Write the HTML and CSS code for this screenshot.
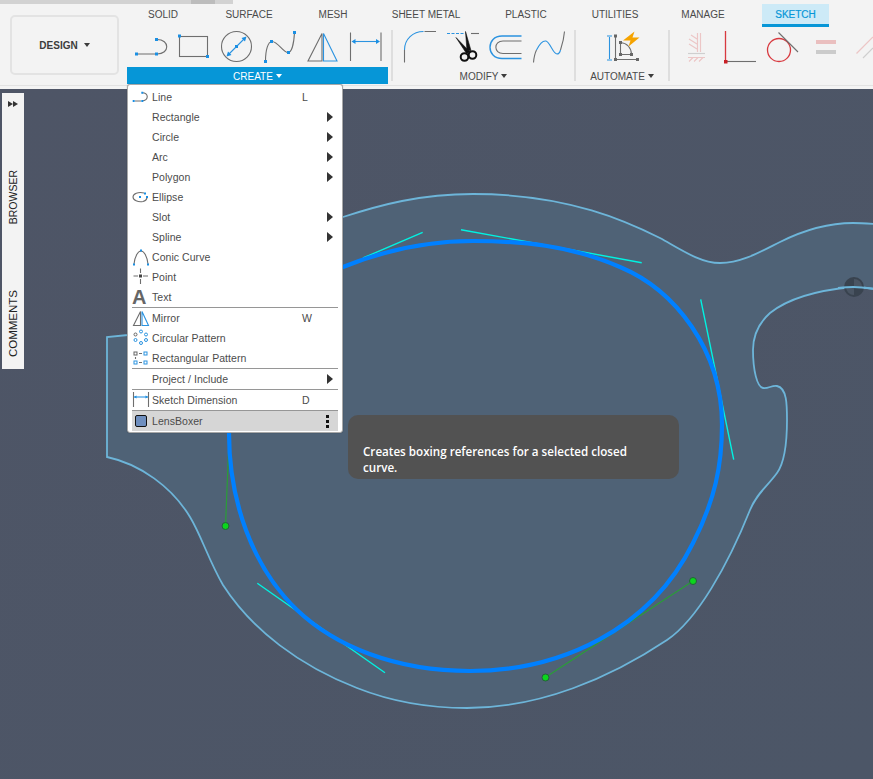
FILE: index.html
```html
<!DOCTYPE html>
<html lang="en">
<head>
<meta charset="utf-8">
<title>Sketch workspace</title>
<link rel="stylesheet" href="styles.css">
</head>
<body>
<div class="app">
  <header class="toolbar">
    <div class="title-strip"><span class="strip-a"></span><span class="strip-b"></span><span class="strip-c"></span></div>
    <div class="toolbar-body">
      <button class="design-btn">DESIGN<i class="caret dark"></i></button>
      <div class="ribbon">
        <nav class="tabs">
          <span class="tab t72">SOLID</span>
          <span class="tab t100">SURFACE</span>
          <span class="tab t68">MESH</span>
          <span class="tab t118">SHEET METAL</span>
          <span class="tab t82">PLASTIC</span>
          <span class="tab t96">UTILITIES</span>
          <span class="tab t80">MANAGE</span>
          <span class="tab tab-active">SKETCH</span>
        </nav>
        <div class="groups">
          <section class="group g-create">
            <div class="icons">
              <svg class="ti" viewBox="132 30 42 37"><path class="gr" d="M137 54H157M157 39.500C170 39.500 170 54 157 54"/><path class="sq" d="M135 52.500h3v3h-3zM155 52.500h3v3h-3zM155 38h3v3h-3z"/></svg>
              <svg class="ti" viewBox="174 30 42 37"><rect class="gr" x="179.500" y="36.500" width="28" height="20"/><path class="sq" d="M178 34.500h3v3h-3zM206 55h3v3h-3z"/></svg>
              <svg class="ti" viewBox="216 30 42 37"><circle class="gr" cx="236.500" cy="46.500" r="15"/><path class="bl" d="M229 54L244 39"/><path class="sq" d="M235 45h3v3h-3zM226.500 56.500l1.500-5 3.500 3.500zM246.500 36.500l-1.500 5-3.500-3.500z"/></svg>
              <svg class="ti" viewBox="258 30 42 37"><path class="gr" d="M265.500 61C265.500 50 268 41.500 272 41.500C278 41.500 283 52.500 288 52.500C292 52.500 294 42 294.500 32.500"/><path class="sq" d="M264 60h3v3h-3zM270 40h3v3h-3zM287 51h3v3h-3zM293 31h3v3h-3z"/></svg>
              <svg class="ti" viewBox="300 30 42 37"><path class="gr" d="M322 33.500V61H308Z"/><path class="bl" d="M323.500 33.500V61H337Z"/></svg>
              <svg class="ti" viewBox="342 30 42 37"><path class="gr" d="M350.500 32.500V61M381 32.500V61"/><path class="bl" d="M353 41.500H378"/><path class="sq" d="M351.500 41.500l4-2.500v5zM380 41.500l-4-2.500v5z"/></svg>
            </div>
            <div class="group-label create-label">CREATE<i class="caret light"></i></div>
          </section>
          <i class="sep"></i>
          <section class="group g-modify">
            <div class="icons">
              <svg class="ti narrow" viewBox="400 30 43 37"><path class="gr" d="M404.500 50V62.500M424.500 31.500H436"/><path class="bl" d="M404.500 50C404.500 39 413 31.500 423.500 31.500"/></svg>
              <svg class="ti narrow" viewBox="443 30 43 37"><path class="bl dash" d="M447 33.500H464"/><path class="gr" d="M471 33.500H479"/><path class="blk" d="M456 37.500L470 52L466.500 53.500ZM465.500 31.500L471 50.500L467 51Z"/><circle class="ring" cx="464.500" cy="57" r="3.800"/><circle class="ring" cx="472.500" cy="55" r="3.800"/></svg>
              <svg class="ti narrow" viewBox="486 30 43 37"><path class="bl thick" d="M521.500 36H502C486 36 486 58.500 502 58.500H521.500"/><path class="gr" d="M521.500 41H503C493.500 41 493.500 53.500 503 53.500H521.500"/></svg>
              <svg class="ti narrow" viewBox="529 30 43 37"><path class="gr" d="M533.500 62.500C534 57 535 53 536.500 50M560.500 50C562.500 44 564 38 564.500 31.500"/><path class="bl" d="M536.500 50C540 43 543 40.500 546 41C550 42 553 54 557 54C559 54 560 52 560.500 50"/></svg>
            </div>
            <div class="group-label">MODIFY<i class="caret dark"></i></div>
          </section>
          <i class="sep"></i>
          <section class="group g-automate">
            <div class="icons center">
              <svg class="ti" viewBox="601 30 42 37"><path class="bl" d="M609.500 37V59M607 36h5M607 60h5"/><path class="gr" d="M615.500 36V59.500H637.500M620.500 42.500V54.500H631.500C631.500 48 627 43 620.500 42.500"/><path class="sqg" d="M614 34.500h3v3h-3zM614 58h3v3h-3zM636 58h3v3h-3zM630 53h3v3h-3zM619 41h3v3h-3zM619 53h3v3h-3z"/><path class="bolt" d="M634.500 31.500L623 40.500H630.500L628.500 46.500L639.500 37.500H632.500Z"/></svg>
            </div>
            <div class="group-label">AUTOMATE<i class="caret dark"></i></div>
          </section>
          <i class="sep"></i>
          <section class="group g-constraints">
            <div class="icons">
              <svg class="ci c-fix" viewBox="680 30 36 37"><path class="pk" d="M697.500 33V52M700.500 33V52M689 39l8 5M689 44l8 5M691 35l6 4M688 57.500H705M693 57.500l-4 4M698 57.500l-4 4M703 57.500l-4 4"/><path class="lg" d="M688 53.500H705"/></svg>
              <svg class="ci c-coin" viewBox="716 30 44 37"><path class="rd" d="M725.500 31V60"/><path class="gr" d="M727 61.500H756"/><path class="rds" d="M724 60h3.500v3.500H724z"/></svg>
              <svg class="ci c-tan" viewBox="760 30 50 37"><circle class="rd" cx="779" cy="50" r="11.500"/><path class="gr" d="M778.500 32.500L798 52"/></svg>
              <svg class="ci c-eq" viewBox="810 30 36 37"><path class="pkf" d="M816 40h20v4h-20z"/><path class="lgf" d="M816 50h20v4h-20z"/></svg>
              <svg class="ci c-par" viewBox="846 30 27 37"><path class="pk" d="M856.500 53.500L873 37"/><path class="lg" d="M863 58L873 48"/></svg>
            </div>
          </section>
        </div>
      </div>
    </div>
    <div class="toolbar-rule"></div>
  </header>

  <main class="canvas">
    <svg class="drawing" viewBox="0 89 873 690" preserveAspectRatio="none">
      <path class="profile" d="M107 337V457C140 464 172 487 190 517C201 535 209 561 223 585C252 630 300 666 357 688C395 703 430 708 467 708C540 708 610 678 667 640C697 620 728 565 750 510C757 493 766 488 777 473C785 462 787 440 787 420C787 405 787 388 777 386C772 385 768 389 763 388C757 387 753 370 753 350C753 335 760 322 770 313C790 297 820 290 853 287C860 287 868 288 875 289V224C868 223.500 860 223 853 223C825 223 800 232 780 242C762 251 742 263 720 263C700 263 680 249 660 238C630 223 570 194 473 194C420 194 380 205 343 217C280 240 200 325 128 335Z"/>
      <path class="tan" d="M422.700 232.300L363 258M461 229.700L641.700 262.700M700.700 299.300L733.700 459.700M257.300 583.300L385 672.700"/>
      <path class="gline" d="M225.500 526L229 440M693 581L546 677"/>
      <path class="lens" d="M229 433C229 500 252 567 297 610C335 646 395 671 470 671C560 671 650 630 693 543C715 500 722 465 722 425C722 350 675 290 620 267C570 245 520 241 473 241C430 241 385 250 343 267C290 290 229 360 229 433Z"/>
      <circle class="gdot" cx="225.500" cy="526" r="3.500"/>
      <circle class="gdot" cx="693" cy="581" r="3.500"/>
      <circle class="gdot" cx="545.500" cy="677.500" r="3.500"/>
      <circle class="pivot" cx="854" cy="287" r="10"/>
      <path class="pivot-inner" d="M854 287V279A8 8 0 0 1 862 287ZM854 287V295A8 8 0 0 1 846 287Z"/>
      <path class="pivot-line" d="M838 288C843 287.500 848 287 853 287C860 287 868 288 875 289"/>
    </svg>

    <aside class="side-panel">
      <span class="side-arrows"><i></i><i></i></span>
      <span class="side-text browser">BROWSER</span>
      <span class="side-text comments">COMMENTS</span>
    </aside>

    <div class="menu">
      <div class="row"><svg class="mi" viewBox="0 0 20 20"><path class="gr" d="M3 14H9M10 5.700C17 5.700 17 14 10 14"/><path class="sq" d="M.7 13h2v2h-2zM9.300 13h2v2h-2zM9.300 4.700h2v2h-2z"/></svg><span class="lbl">Line</span><span class="key">L</span></div>
      <div class="row"><span></span><span class="lbl">Rectangle</span><span></span><i class="sub"></i></div>
      <div class="row"><span></span><span class="lbl">Circle</span><span></span><i class="sub"></i></div>
      <div class="row"><span></span><span class="lbl">Arc</span><span></span><i class="sub"></i></div>
      <div class="row"><span></span><span class="lbl">Polygon</span><span></span><i class="sub"></i></div>
      <div class="row"><svg class="mi" viewBox="0 0 20 20"><path class="gr" d="M12 6C6 4.500 1 7 1 10S6 15.500 11 14.500C13 14 14.500 13 15 11"/><path class="sq" d="M7 9h2v2H7zM12 5.500h2v2h-2zM14 9h2v2h-2z"/></svg><span class="lbl">Ellipse</span></div>
      <div class="row"><span></span><span class="lbl">Slot</span><span></span><i class="sub"></i></div>
      <div class="row"><span></span><span class="lbl">Spline</span><span></span><i class="sub"></i></div>
      <div class="row"><svg class="mi" viewBox="0 0 20 20"><path class="gr" d="M2 17C3 9 6 4 9 4S15 9 16 17"/><path class="sq" d="M1 16.500h2v2H1zM15 16.500h2v2h-2zM8 2.500h2v2H8z"/></svg><span class="lbl">Conic Curve</span></div>
      <div class="row"><svg class="mi" viewBox="0 0 20 20"><path class="gr" d="M1.500 9H6M11 9H16M8.500 1.500V6M8.500 12V17"/><path class="dk" d="M7 7.500h3v3H7z"/></svg><span class="lbl">Point</span></div>
      <div class="row"><span class="glyph-a">A</span><span class="lbl">Text</span></div>
      <hr class="rule">
      <div class="row"><svg class="mi" viewBox="0 0 20 20"><path class="gr" d="M8.500 3.500V17.500H1.500Z"/><path class="bl" d="M10 3.500V17.500H16.500Z"/></svg><span class="lbl">Mirror</span><span class="key">W</span></div>
      <div class="row"><svg class="mi" viewBox="0 0 20 20"><g class="ringb"><circle cx="9" cy="3.500" r="1.500"/><circle cx="14" cy="6.500" r="1.500"/><circle cx="14" cy="12" r="1.500"/><circle cx="9" cy="15" r="1.500"/><circle cx="3.500" cy="12" r="1.500"/></g><circle class="ringg" cx="3.500" cy="6.500" r="1.500"/></svg><span class="lbl">Circular Pattern</span></div>
      <div class="row"><svg class="mi" viewBox="0 0 20 20"><rect class="ringg" x="2" y="4" width="3" height="3"/><rect class="ringb" x="12" y="4" width="3" height="3"/><rect class="ringb" x="2" y="13" width="3" height="3"/><rect class="ringb" x="12" y="13" width="3" height="3"/><path class="gr" d="M7 5.500H10M3.500 9V11M7 14.500H10"/></svg><span class="lbl">Rectangular Pattern</span></div>
      <hr class="rule">
      <div class="row"><span></span><span class="lbl">Project / Include</span><span></span><i class="sub"></i></div>
      <hr class="rule">
      <div class="row"><svg class="mi" viewBox="0 0 20 20"><path class="gr" d="M1.500 2V17M16.500 2V17"/><path class="bl" d="M2 7H16"/><path class="sq" d="M2 7l2.500-1.500v3zM16 7l-2.500-1.500v3z"/></svg><span class="lbl">Sketch Dimension</span><span class="key">D</span></div>
      <hr class="rule">
      <div class="row row-on"><span class="lens-icon"></span><span class="lbl">LensBoxer</span><span></span><span class="kebab"><i></i><i></i><i></i></span></div>
    </div>

    <div class="tip">Creates boxing references for a selected closed curve.</div>
  </main>
</div>
</body>
</html>
```
FILE: styles.css
```css
* { box-sizing: border-box; }
html, body { margin: 0; height: 100%; }
body { font-family: "Liberation Sans", Arial, sans-serif; background: #4d5566; overflow: hidden; }
.app { width: 873px; height: 779px; display: flex; flex-direction: column; }

.toolbar { height: 89px; background: #f3f3f3; flex: none; display: flex; flex-direction: column; }
.title-strip { height: 4px; display: flex; flex: none; }
.strip-a { width: 191px; background: #d2d2d2; }
.strip-b { width: 24px; background: #bcbcbc; }
.strip-c { width: 18px; background: #d2d2d2; }
.toolbar-body { display: flex; height: 81px; padding-left: 10px; }
.toolbar-rule { height: 1px; background: #e2e2e2; }

.design-btn { width: 109px; height: 60px; margin: 11px 8px 0 0; border: 2px solid #e3e3e3; border-radius: 5px; background: #f3f3f3; font: bold 10px "Liberation Sans", Arial, sans-serif; color: #3c3c3c; padding: 0; }
.caret { display: inline-block; width: 0; height: 0; border-left: 3px solid transparent; border-right: 3px solid transparent; margin-left: 3px; vertical-align: 2px; }
.design-btn .caret { margin-left: 6px; }
.caret.dark { border-top: 4px solid #3c3c3c; }
.caret.light { border-top: 4px solid #fff; }

.ribbon { display: flex; flex-direction: column; flex: 1; }
.tabs { display: flex; height: 23px; margin-bottom: 3px; }
.tab { font-size: 10px; color: #4a4a4a; text-align: center; line-height: 22px; }
.t72 { width: 72px; } .t100 { width: 100px; } .t68 { width: 68px; } .t118 { width: 118px; }
.t82 { width: 82px; } .t96 { width: 96px; } .t80 { width: 80px; }
.tab-active { width: 67px; margin-left: 19px; background: #cdeaf7; border-bottom: 3px solid #0696d7; color: #0696d7; -webkit-text-stroke: .2px #0696d7; }

.groups { display: flex; }
.group { flex: none; display: flex; flex-direction: column; }
.g-create { width: 261px; }
.g-modify { width: 181px; }
.g-automate { width: 92px; }
.g-constraints { width: 203px; }
.icons { height: 37px; display: flex; }
.g-create .icons { padding-left: 5px; }
.g-modify .icons { padding-left: 7px; }
.icons.center { padding-left: 25px; }
.ti { width: 42px; height: 37px; flex: none; }
.ti.narrow { width: 43px; }
.ci { height: 37px; flex: none; }
.c-fix { width: 36px; margin-left: 10px; } .c-coin { width: 44px; } .c-tan { width: 50px; } .c-eq { width: 36px; } .c-par { width: 27px; }
.group-label { height: 17px; font-size: 10px; line-height: 20px; color: #4a4a4a; text-align: center; }
.create-label { background: #0696d7; color: #fff; }
.sep { flex: none; width: 2px; height: 51px; margin-left: 3px; background: #dedede; }
.g-automate + .sep { margin-left: 0; }
.g-modify + .sep { margin-left: 0; }

svg path, svg circle, svg rect, svg ellipse { fill: none; }
.gr { stroke: #6e6e6e; stroke-width: 1.100; }
svg .sq { fill: #1a8fe3; stroke: none; }
svg .sqg { fill: #666; stroke: none; }
svg .dk { fill: #444; stroke: none; }
.bl { stroke: #2b93e0; stroke-width: 1.100; }
.bl.thick { stroke-width: 1.400; }
.dash { stroke-dasharray: 3 1.500; }
svg .blk { fill: #111; stroke: #111; stroke-width: .6; }
svg .ring { stroke: #111; stroke-width: 2; }
svg .bolt { fill: #f5a300; stroke: none; }
.pk { stroke: #ecc6c6; stroke-width: 1.200; }
.lg { stroke: #cfcfcf; stroke-width: 1.200; }
.rd { stroke: #d8393f; stroke-width: 1.300; }
svg .rds { fill: #c91f25; stroke: none; }
svg .pkf { fill: #eabfbf; stroke: none; }
svg .lgf { fill: #cbcbcb; stroke: none; }
.ringb, .ringb circle, svg rect.ringb { stroke: #2b93e0; stroke-width: 1; }
.ringg, svg rect.ringg { stroke: #666; stroke-width: 1; }

.canvas { position: relative; flex: 1; background: linear-gradient(135deg, #4e5566, #4c5667); }
.drawing { position: absolute; inset: 0; width: 100%; height: 100%; }
svg .profile { fill: #4f6276; stroke: #6db5d9; stroke-width: 1.800; }
.tan { stroke: #00f2e2; stroke-width: 1.400; }
.gline { stroke: #2a9d38; stroke-width: 1.200; }
.lens { stroke: #0080ff; stroke-width: 4.200; }
svg .gdot { fill: #0bd61d; stroke: #25603a; stroke-width: 1; }
svg .pivot { fill: #39434f; }
svg .pivot-inner { fill: #4a5563; }
svg .pivot-line { stroke: #6db5d9; stroke-width: 1.800; }

.side-panel { position: absolute; left: 2px; top: 4px; width: 22px; height: 276px; background: #f3f3f3; display: flex; flex-direction: column; align-items: center; }
.side-arrows { display: flex; margin-top: 8px; }
.side-arrows i { width: 0; height: 0; border-left: 5px solid #333; border-top: 3.500px solid transparent; border-bottom: 3.500px solid transparent; }
.side-text { writing-mode: vertical-rl; transform: rotate(180deg); font-size: 11.500px; color: #222; line-height: 22px; }
.browser { margin-top: 63px; font-size: 10.500px; }
.comments { margin-top: 66px; }

.menu { position: absolute; left: 127px; top: -5px; width: 216px; height: 349px; background: #fff; border: 1px solid #a8a8a8; border-radius: 3px; padding: 2px 4px 0; box-shadow: 0 0 1px rgba(0, 0, 0, .4); }
.row { display: grid; grid-template-columns: 20px 1fr 20px 16px; height: 20px; align-items: center; font-size: 10.500px; color: #4b4b4b; }
.lbl { white-space: nowrap; letter-spacing: .05px; }
.key { color: #4b4b4b; }
.mi { width: 20px; height: 20px; }
.sub { width: 0; height: 0; margin-left: 5px; border-left: 6px solid #333; border-top: 5px solid transparent; border-bottom: 5px solid transparent; }
.rule { height: 1px; margin: 0; border: 0; background: #969696; }
.glyph-a { font: bold 20px/20px "Liberation Sans", Arial, sans-serif; color: #666; }
.row-on { background: #d6d6d6; }
.lens-icon { width: 12px; height: 12px; margin-left: 3px; background: #6f8fbf; border: 1px solid #111; border-radius: 2px; }
.kebab { display: flex; flex-direction: column; gap: 2px; margin-left: 4px; }
.kebab i { width: 3px; height: 3px; background: #111; }

.tip { position: absolute; left: 348px; top: 326px; width: 331px; height: 64px; padding: 29px 20px 0 15px; background: #525252; border-radius: 10px; color: #fff; font: 600 11.630px/16px "Open Sans", sans-serif; }
```
